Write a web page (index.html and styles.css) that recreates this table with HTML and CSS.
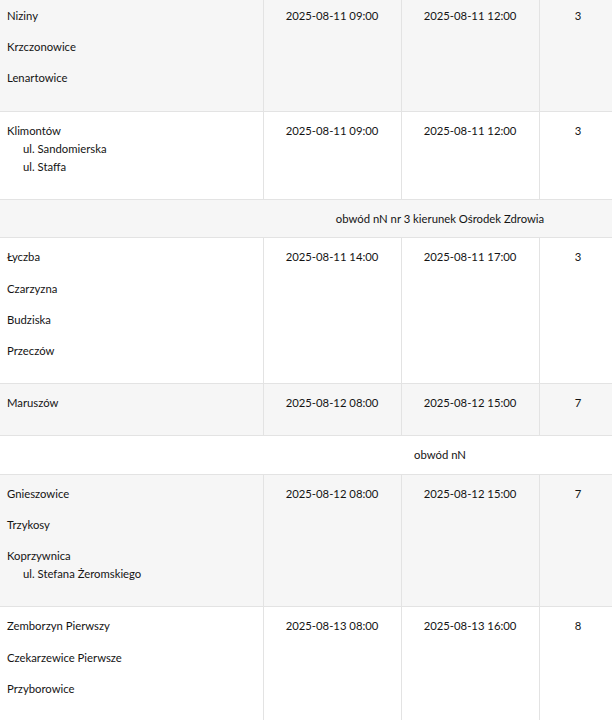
FILE: index.html
```html
<!DOCTYPE html>
<html lang="pl">
<head>
<meta charset="utf-8">
<title>Wyłączenia</title>
<link rel="stylesheet" href="styles.css">
</head>
<body>
<div class="viewport">
<table class="outages">
<colgroup>
<col class="c-place"><col class="c-date"><col class="c-date"><col class="c-num"><col class="c-rest">
</colgroup>
<tbody>
<tr>
<td class="place"><p>Niziny</p><p>Krzczonowice</p><p>Lenartowice</p></td>
<td class="mid">2025-08-11 09:00</td><td class="mid">2025-08-11 12:00</td><td class="mid">3</td><td class="mid"></td>
</tr>
<tr>
<td class="place"><p>Klimontów<span class="street">ul. Sandomierska</span><span class="street">ul. Staffa</span></p></td>
<td class="mid">2025-08-11 09:00</td><td class="mid">2025-08-11 12:00</td><td class="mid">3</td><td class="mid"></td>
</tr>
<tr class="section">
<td colspan="5">obwód nN nr 3 kierunek Ośrodek Zdrowia</td>
</tr>
<tr>
<td class="place"><p>Łyczba</p><p>Czarzyzna</p><p>Budziska</p><p>Przeczów</p></td>
<td class="mid">2025-08-11 14:00</td><td class="mid">2025-08-11 17:00</td><td class="mid">3</td><td class="mid"></td>
</tr>
<tr>
<td class="place"><p>Maruszów</p></td>
<td class="mid">2025-08-12 08:00</td><td class="mid">2025-08-12 15:00</td><td class="mid">7</td><td class="mid"></td>
</tr>
<tr class="section">
<td colspan="5">obwód nN</td>
</tr>
<tr>
<td class="place"><p>Gnieszowice</p><p>Trzykosy</p><p>Koprzywnica<span class="street">ul. Stefana Żeromskiego</span></p></td>
<td class="mid">2025-08-12 08:00</td><td class="mid">2025-08-12 15:00</td><td class="mid">7</td><td class="mid"></td>
</tr>
<tr>
<td class="place"><p>Zemborzyn Pierwszy</p><p>Czekarzewice Pierwsze</p><p>Przyborowice</p></td>
<td class="mid">2025-08-13 08:00</td><td class="mid">2025-08-13 16:00</td><td class="mid">8</td><td class="mid"></td>
</tr>
</tbody>
</table>
</div>
</body>
</html>
```
FILE: styles.css
```css
html, body {
  margin: 0;
  padding: 0;
  background: #ffffff;
}

.viewport {
  width: 612px;
  height: 720px;
  overflow: hidden;
}

.outages {
  margin-top: -4px;
  width: 880px;
  table-layout: fixed;
  border-collapse: collapse;
  font-family: "Lato", "Open Sans", sans-serif;
  font-size: 11.3px;
  line-height: 18.2px;
  color: #141414;
}

.c-place { width: 263px; }
.c-date { width: 138px; }
.c-num { width: 78px; }
.c-rest { width: 263px; }

.outages tr {
  border-top: 1px solid #e3e3e3;
}

.outages tr:nth-child(odd) {
  background: #f6f6f6;
}

.outages td {
  vertical-align: top;
  padding: 10px 7px;
  border-left: 1px solid #e3e3e3;
}

.outages td:first-child {
  border-left: none;
}

.outages td.mid {
  text-align: center;
}

.place p {
  margin: 0 0 13px;
}

.street {
  display: block;
  padding-left: 16px;
}

.section td {
  text-align: center;
  padding: 10px 7px 9px;
}
```
